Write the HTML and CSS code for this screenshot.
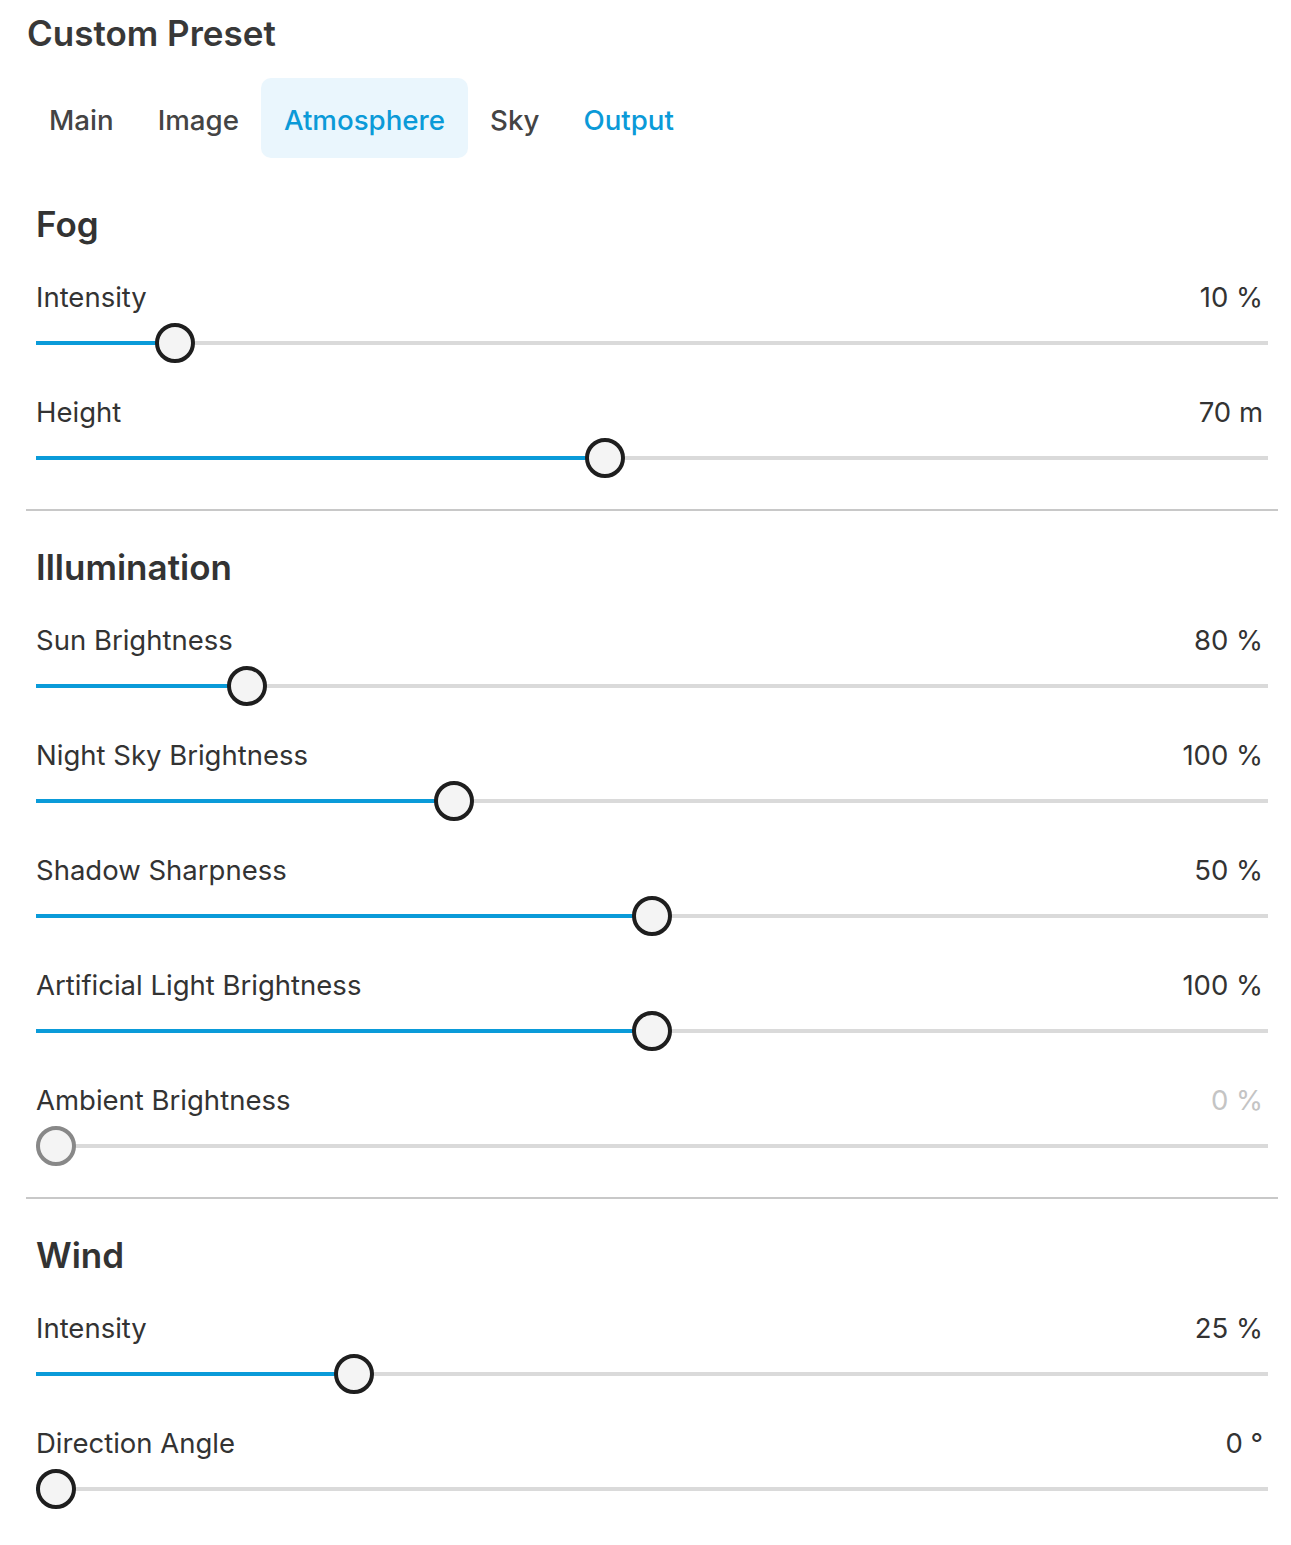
FILE: index.html
```html
<!DOCTYPE html>
<html>
<head>
<meta charset="utf-8">
<link rel="stylesheet" href="styles.css">
</head>
<body>
<div class="page">
  <h1 class="title">Custom Preset</h1>
  <nav class="tabs">
    <div class="tab">Main</div>
    <div class="tab">Image</div>
    <div class="tab active">Atmosphere</div>
    <div class="tab">Sky</div>
    <div class="tab link">Output</div>
  </nav>

  <section class="section first">
    <h2 class="heading">Fog</h2>
    <div class="row">
      <div class="row-head"><span class="label">Intensity</span><span class="value">10 %</span></div>
      <div class="slider" style="--p:0.1"><div class="track"></div><div class="fill"></div><div class="thumb"></div></div>
    </div>
    <div class="row">
      <div class="row-head"><span class="label">Height</span><span class="value">70 m</span></div>
      <div class="slider" style="--p:0.4606"><div class="track"></div><div class="fill"></div><div class="thumb"></div></div>
    </div>
  </section>

  <section class="section">
    <h2 class="heading">Illumination</h2>
    <div class="row">
      <div class="row-head"><span class="label">Sun Brightness</span><span class="value">80 %</span></div>
      <div class="slider" style="--p:0.16"><div class="track"></div><div class="fill"></div><div class="thumb"></div></div>
    </div>
    <div class="row">
      <div class="row-head"><span class="label">Night Sky Brightness</span><span class="value">100 %</span></div>
      <div class="slider" style="--p:0.3339"><div class="track"></div><div class="fill"></div><div class="thumb"></div></div>
    </div>
    <div class="row">
      <div class="row-head"><span class="label">Shadow Sharpness</span><span class="value">50 %</span></div>
      <div class="slider" style="--p:0.5"><div class="track"></div><div class="fill"></div><div class="thumb"></div></div>
    </div>
    <div class="row">
      <div class="row-head"><span class="label">Artificial Light Brightness</span><span class="value">100 %</span></div>
      <div class="slider" style="--p:0.5"><div class="track"></div><div class="fill"></div><div class="thumb"></div></div>
    </div>
    <div class="row disabled">
      <div class="row-head"><span class="label">Ambient Brightness</span><span class="value">0 %</span></div>
      <div class="slider" style="--p:0"><div class="track"></div><div class="thumb"></div></div>
    </div>
  </section>

  <section class="section">
    <h2 class="heading">Wind</h2>
    <div class="row">
      <div class="row-head"><span class="label">Intensity</span><span class="value">25 %</span></div>
      <div class="slider" style="--p:0.25"><div class="track"></div><div class="fill"></div><div class="thumb"></div></div>
    </div>
    <div class="row">
      <div class="row-head"><span class="label">Direction Angle</span><span class="value">0 °</span></div>
      <div class="slider" style="--p:0"><div class="track"></div><div class="fill"></div><div class="thumb"></div></div>
    </div>
  </section>
</div>
</body>
</html>
```

FILE: styles.css
```css
* { box-sizing: border-box; }
html, body { margin: 0; padding: 0; background: #ffffff; }
body {
  font-family: Inter, "Noto Sans", "DejaVu Sans", sans-serif;
  color: #333333;
}
.page {
  width: 1252px;
  margin-left: 26px;
  padding-top: 14px;
}
.title {
  margin: 0 0 0 1px;
  font-size: 35px;
  line-height: 38px;
  font-weight: 600;
  color: #383838;
}
.tabs {
  display: flex;
  margin-top: 26px;
  height: 80px;
}
.tab {
  padding: 4px 22px 0;
  height: 80px;
  display: flex;
  align-items: center;
  font-size: 27.7px;
  font-weight: 500;
  color: #444444;
  border-radius: 10px;
}
.tab:first-child { padding-left: 23px; }
.tab.active {
  background: #eaf6fd;
  color: #0b9ad8;
  padding: 4px 23px 0;
}
.tab.link { color: #0b9ad8; }

.section {
  padding: 37px 10px 31px;
  border-top: 2px solid #c8c8c8;
}
.section.first {
  border-top: none;
  padding-top: 47px;
}
.heading {
  margin: 0 0 39px;
  font-size: 35px;
  line-height: 38px;
  font-weight: 600;
  color: #333333;
}
.row { margin-bottom: 34px; }
.row:last-child { margin-bottom: 0; }
.row-head {
  display: flex;
  justify-content: space-between;
  height: 30px;
  line-height: 30px;
  font-size: 27.5px;
  margin-bottom: 11px;
}
.value { padding-right: 5px; }
.disabled .value { color: #c4c4c4; }

.slider {
  position: relative;
  height: 40px;
}
.track {
  position: absolute;
  left: 0; right: 0;
  top: 18px;
  height: 4px;
  background: #dadada;
}
.fill {
  position: absolute;
  left: 0;
  top: 18px;
  height: 4px;
  width: calc(20px + (100% - 40px) * var(--p));
  background: #0a9bd9;
}
.thumb {
  position: absolute;
  top: 0;
  left: calc((100% - 40px) * var(--p));
  width: 40px;
  height: 40px;
  border-radius: 50%;
  border: 4px solid #1e1e1e;
  background: #f4f4f4;
}
.disabled .thumb { border-color: #888888; }
```
